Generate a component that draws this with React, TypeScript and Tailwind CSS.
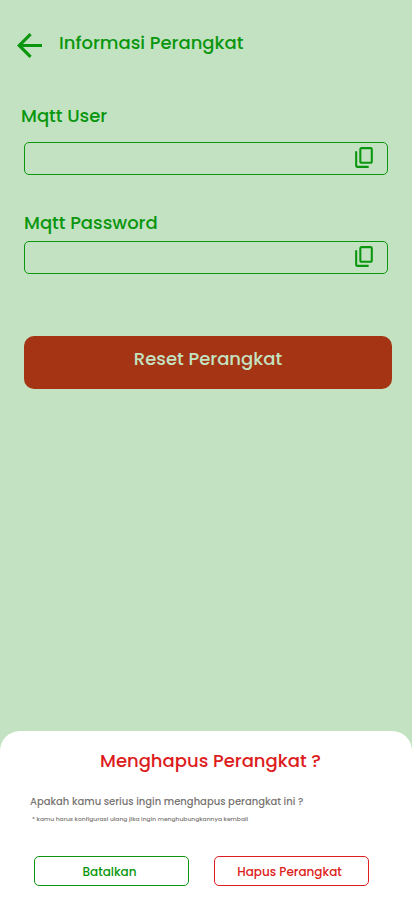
import { useState } from "react";

function ArrowBackIcon() {
  return (
    <svg width="25" height="25" viewBox="4 4 16 16" fill="currentColor" aria-hidden="true">
      <path d="M20 11H7.83l5.59-5.59L12 4l-8 8 8 8 1.41-1.41L7.83 13H20v-2z" />
    </svg>
  );
}

function CopyIcon() {
  return (
    <svg width="25" height="25" viewBox="0 -960 960 960" fill="currentColor" aria-hidden="true">
      <path d="M360-240q-33 0-56.5-23.5T280-320v-480q0-33 23.5-56.5T360-880h360q33 0 56.5 23.5T800-800v480q0 33-23.5 56.5T720-240H360Zm0-80h360v-480H360v480ZM200-80q-33 0-56.5-23.5T120-160v-560h80v560h440v80H200Z" />
    </svg>
  );
}

function CopyField({ id }: { id: string }) {
  const [value, setValue] = useState("");

  return (
    <div className="mx-1 flex h-[33px] items-start rounded-[5px] border border-[#0a960e] pr-[10px] pt-0.5">
      <input
        id={id}
        type="text"
        value={value}
        onChange={(e) => setValue(e.target.value)}
        className="min-w-0 flex-1 bg-transparent px-3 text-sm leading-7 outline-none"
      />
      <button type="button" aria-label="Salin" onClick={() => navigator.clipboard?.writeText(value)}>
        <CopyIcon />
      </button>
    </div>
  );
}

export default function App() {
  return (
    <div className="flex min-h-screen flex-col bg-[#c3e2c2] font-['Poppins','Inter',sans-serif] font-medium text-[#0a960e]">
      <header className="flex items-start gap-[17px] px-[17px] pt-[29px]">
        <button type="button" aria-label="Kembali" className="pt-1">
          <ArrowBackIcon />
        </button>
        <h1 className="text-lg leading-7">Informasi Perangkat</h1>
      </header>

      <main className="px-5 pb-8 pt-11">
        <label htmlFor="mqtt-user" className="mx-px mb-3 block text-lg leading-7">
          Mqtt User
        </label>
        <CopyField id="mqtt-user" />

        <label htmlFor="mqtt-password" className="mx-1 mb-1 mt-[34px] block text-lg leading-7">
          Mqtt Password
        </label>
        <CopyField id="mqtt-password" />

        <div className="ml-1 mt-[62px]">
          <button
            type="button"
            className="h-[53px] w-full rounded-[10px] bg-[#a53414] pb-2 text-lg leading-7 text-[#c3e2c2]"
          >
            Reset Perangkat
          </button>
        </div>
      </main>

      {/* Konfirmasi hapus */}
      <section
        role="dialog"
        aria-labelledby="hapus-title"
        className="mt-auto rounded-t-[20px] bg-white pb-[31px] pt-4"
      >
        <h2 id="hapus-title" className="pl-[34px] pr-[25px] text-center text-lg leading-7 text-[#dd1c20]">
          Menghapus Perangkat ?
        </h2>
        <p className="mt-[19px] px-[30px] text-[10px] leading-4 text-[#777472]">
          Apakah kamu serius ingin menghapus perangkat ini ?
        </p>
        <p className="mt-[3px] px-8 text-[6px] leading-3 text-[#777472]">
          * kamu harus konfigurasi ulang jika ingin menghubungkannya kembali
        </p>
        <div className="mt-[31px] grid grid-cols-2 gap-[25px] pl-[34px] pr-[43px] text-xs">
          <button type="button" className="h-[30px] rounded-[5px] border border-[#0a960e] pr-1 pt-0.5">
            Batalkan
          </button>
          <button
            type="button"
            className="h-[30px] rounded-[5px] border border-[#dd1c20] pr-1 pt-0.5 text-[#dd1c20]"
          >
            Hapus Perangkat
          </button>
        </div>
      </section>
    </div>
  );
}
